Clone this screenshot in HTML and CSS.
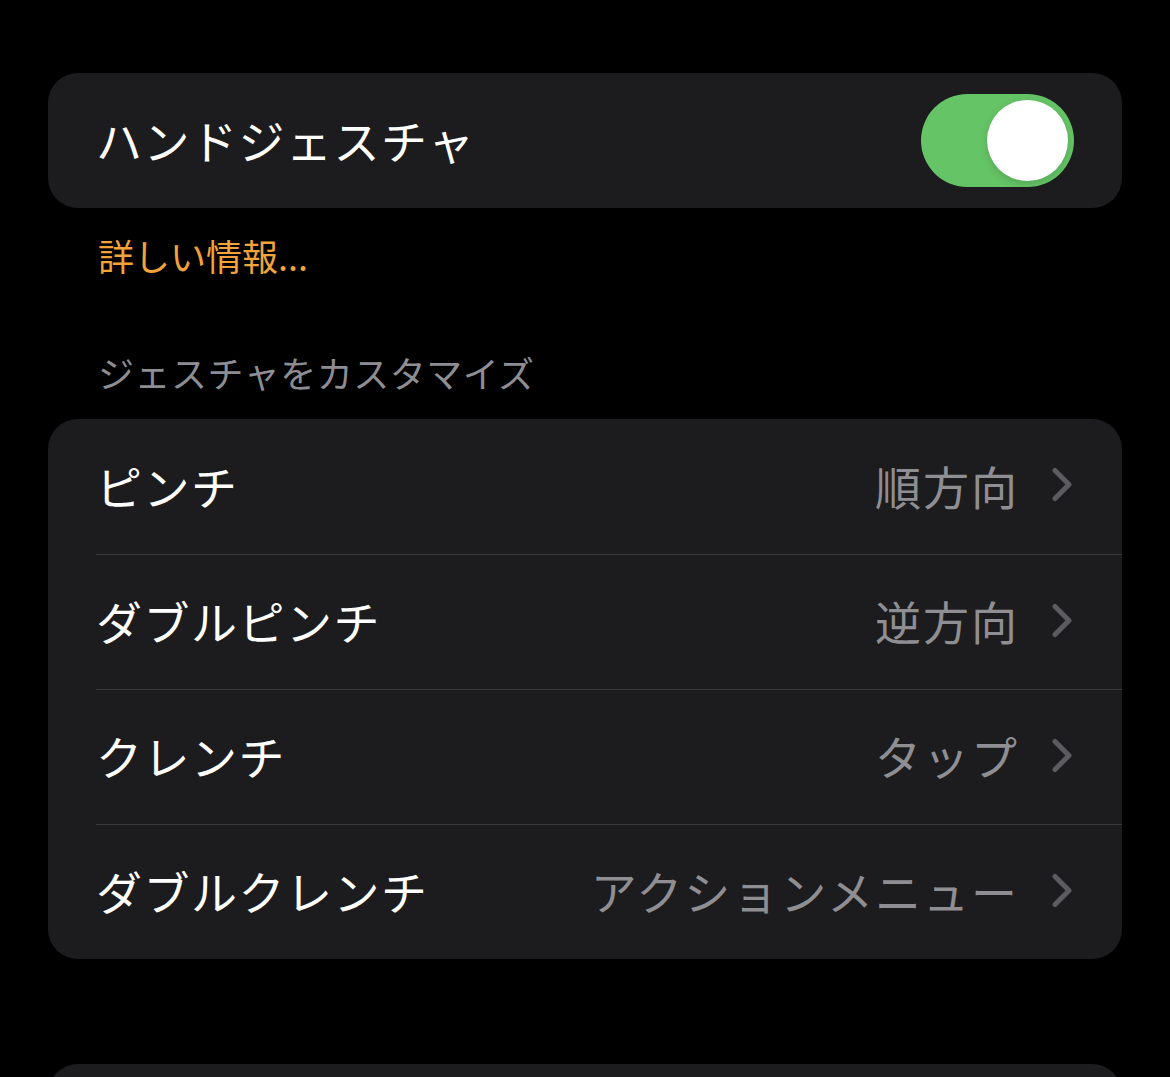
FILE: index.html
```html
<!DOCTYPE html>
<html lang="ja">
<head>
    <meta charset="UTF-8">
    <meta name="viewport" content="width=device-width, initial-scale=1.0">
    <title>ハンドジェスチャ</title>
    <link rel="stylesheet" href="styles.css">
</head>
<body>

<div class="ajustes">
    <div class="grupo">
        <div class="fila">
            <span class="fila-titulo">ハンドジェスチャ</span>
            <div class="interruptor activo"><span class="perilla"></span></div>
        </div>
    </div>
    <p class="pie-enlace">詳しい情報...</p>

    <p class="cabecera">ジェスチャをカスタマイズ</p>
    <div class="grupo">
        <div class="fila">
            <span class="fila-titulo">ピンチ</span>
            <span class="fila-valor">順方向</span>
            <svg class="chevron" viewBox="0 0 20 35"><path d="M3 3.5 L17 17.5 L3 31.5"/></svg>
        </div>
        <div class="fila">
            <span class="fila-titulo">ダブルピンチ</span>
            <span class="fila-valor">逆方向</span>
            <svg class="chevron" viewBox="0 0 20 35"><path d="M3 3.5 L17 17.5 L3 31.5"/></svg>
        </div>
        <div class="fila">
            <span class="fila-titulo">クレンチ</span>
            <span class="fila-valor">タップ</span>
            <svg class="chevron" viewBox="0 0 20 35"><path d="M3 3.5 L17 17.5 L3 31.5"/></svg>
        </div>
        <div class="fila">
            <span class="fila-titulo">ダブルクレンチ</span>
            <span class="fila-valor">アクションメニュー</span>
            <svg class="chevron" viewBox="0 0 20 35"><path d="M3 3.5 L17 17.5 L3 31.5"/></svg>
        </div>
    </div>

    <div class="grupo grupo-siguiente">
        <div class="fila"></div>
    </div>
</div>

</body>
</html>
```

FILE: styles.css
```css
body {
    margin: 0;
    padding: 0;
    background-color: #000;
    color: #fff;
    font-family: "Noto Sans CJK JP", "Noto Sans", sans-serif;
    height: 1077px;
    overflow: hidden;
}

.ajustes {
    padding: 73px 48px 0;
}

.grupo {
    background-color: #1c1c1e;
    border-radius: 30px;
    overflow: hidden;
}

.fila {
    display: flex;
    align-items: center;
    box-sizing: border-box;
    height: 135px;
    margin-left: 48px;
    padding-right: 50px;
    padding-bottom: 4px;
    border-top: 1px solid #3a3a3c;
}

.fila:first-child {
    border-top: none;
}

.fila-titulo {
    flex: 1;
    font-size: 46px;
    line-height: 56px;
    letter-spacing: 1.5px;
    white-space: nowrap;
}

.fila-valor {
    font-size: 46px;
    line-height: 56px;
    letter-spacing: 2px;
    color: #8e8e93;
    margin-right: 33px;
    white-space: nowrap;
}

.chevron {
    width: 20px;
    height: 35px;
    fill: none;
    stroke: #5b5b60;
    stroke-width: 5;
    stroke-linecap: round;
    stroke-linejoin: round;
}

.grupo:first-child .fila {
    padding-right: 48px;
}

.interruptor {
    width: 153px;
    height: 93px;
    border-radius: 47px;
    background-color: #39393d;
    position: relative;
    margin-top: 4px;
}

.interruptor.activo {
    background-color: #65c466;
}

.perilla {
    position: absolute;
    top: 6px;
    right: 6px;
    width: 81px;
    height: 81px;
    border-radius: 50%;
    background-color: #fff;
    box-shadow: 0px 3px 8px rgba(0, 0, 0, 0.15);
}

.pie-enlace {
    margin: 25px 0 0 50px;
    font-size: 36px;
    line-height: 44px;
    color: #f2a33a;
}

.cabecera {
    margin: 73px 0 25px 50px;
    font-size: 36px;
    line-height: 44px;
    letter-spacing: 0.5px;
    color: #8d8d93;
}

.grupo-siguiente {
    margin-top: 105px;
}
```
